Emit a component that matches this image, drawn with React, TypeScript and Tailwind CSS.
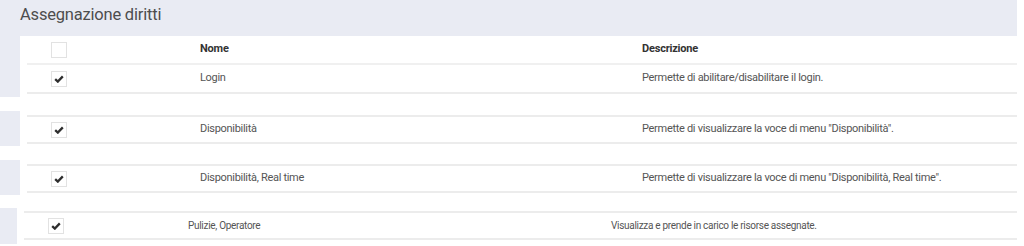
const font = { fontFamily: 'Roboto, "Liberation Sans", sans-serif' };

const rows = [
  { nome: 'Login', desc: 'Permette di abilitare/disabilitare il login.' },
  { nome: 'Disponibilità', desc: 'Permette di visualizzare la voce di menu "Disponibilità".' },
  { nome: 'Disponibilità, Real time', desc: 'Permette di visualizzare la voce di menu "Disponibilità, Real time".' },
];

const Check = ({ checked }: { checked: boolean }) => (
  <span className="flex h-[16px] w-[16px] items-center justify-center border border-[#e2e2e2] bg-white">
    {checked && (
      <svg width="10" height="8" viewBox="0 0 10 8">
        <path d="M1.2 4.2 L3.8 6.6 L8.8 1.4" fill="none" stroke="#2e2e2e" strokeWidth="2.3" strokeLinejoin="miter" />
      </svg>
    )}
  </span>
);

const Strip = ({ w = 'w-[20px]' }: { w?: string }) => <div className={`${w} shrink-0 bg-[#e9ebf3]`} />;

export default function App() {
  return (
    <div className="w-[1024px] h-[246px] overflow-hidden bg-white text-[11px] text-[#555]" style={font}>
      {/* title band */}
      <div className="h-[36px] w-[1017px] bg-[#e9ebf3] pl-[20px] pt-[4px] text-[16.5px] leading-[22px] tracking-[-0.2px] text-[#4d4d4d]">
        Assegnazione diritti
      </div>

      {/* segment 1: header + login */}
      <div className="flex h-[61px]">
        <Strip />
        <div className="w-[997px] pl-[7px]">
          <div className="flex h-[29px] items-center border-b-2 border-[#f0f0f0] font-bold text-[#333] tracking-[-0.2px]">
            <div className="w-[173px] pl-[24px]"><Check checked={false} /></div>
            <div className="w-[442px]">Nome</div>
            <div>Descrizione</div>
          </div>
          <div className="flex h-[29px] items-center border-b-2 border-[#ececec] tracking-[-0.3px]">
            <div className="w-[173px] pl-[24px]"><Check checked /></div>
            <div className="w-[442px]">{rows[0].nome}</div>
            <div>{rows[0].desc}</div>
          </div>
        </div>
      </div>

      {/* segments 2 and 3 */}
      {rows.slice(1).map((r) => (
        <div key={r.nome} className="mt-[14px] flex h-[35px]">
          <Strip />
          <div className="w-[997px] pl-[7px] pt-[4px]">
            <div className="flex h-[29px] items-center border-y-2 border-[#ececec] tracking-[-0.3px]">
              <div className="w-[173px] pl-[24px]"><Check checked /></div>
              <div className="w-[442px]">{r.nome}</div>
              <div>{r.desc}</div>
            </div>
          </div>
        </div>
      ))}

      {/* segment 4 */}
      <div className="mt-[13px] flex h-[36px]">
        <Strip w="w-[17px]" />
        <div className="w-[1000px] pl-[7px] pt-[3px]">
          <div className="flex h-[29px] items-center border-y-2 border-[#ececec] text-[10px] tracking-[-0.3px]">
            <div className="w-[164px] pl-[24px]"><Check checked /></div>
            <div className="w-[423px]">Pulizie, Operatore</div>
            <div>Visualizza e prende in carico le risorse assegnate.</div>
          </div>
        </div>
      </div>
    </div>
  );
}
